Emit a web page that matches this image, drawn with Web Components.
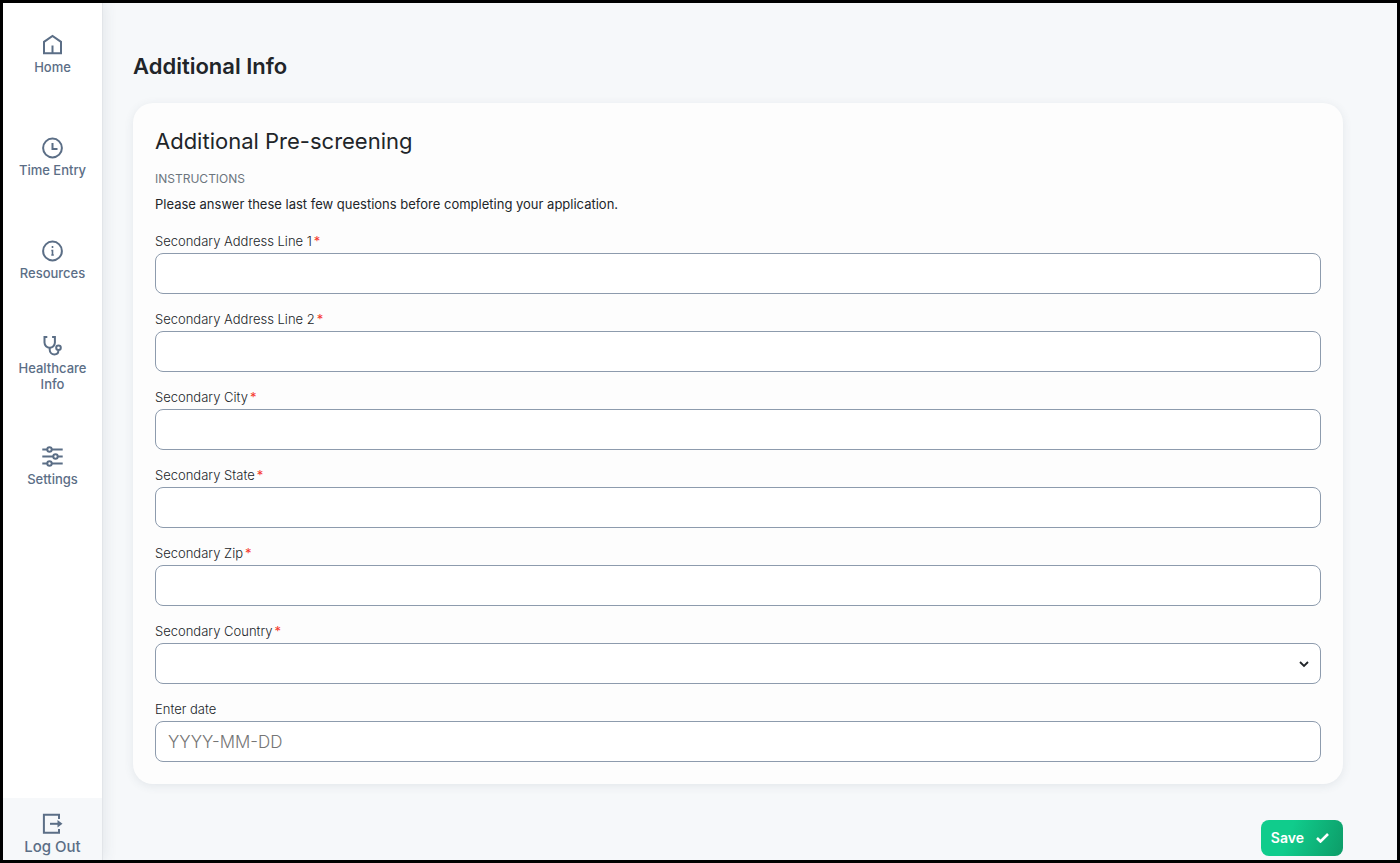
<!DOCTYPE html>
<html lang="en">
<head>
<meta charset="utf-8">
<meta name="viewport" content="width=device-width, initial-scale=1">
<title>Additional Info</title>
<style>
    * {
        box-sizing: border-box;
    }
    body {
        margin: 0;
        min-height: 100vh;
        display: flex;
        border: 3px solid #000;
        background-color: #f6f8fa;
        color: #212529;
        font-family: Inter, "Open Sans", sans-serif;
        --slate: #5b6e86;
        --line: #8d9bad;
    }
</style>
</head>
<body>
    <side-bar>
        <nav-item icon="home" href="#home">Home</nav-item>
        <nav-item icon="clock" href="#time">Time Entry</nav-item>
        <nav-item icon="info" href="#resources">Resources</nav-item>
        <nav-item icon="stethoscope" href="#healthcare">Healthcare Info</nav-item>
        <nav-item icon="sliders" href="#settings">Settings</nav-item>
        <nav-item slot="bottom" class="logout" icon="logout" href="#logout">Log Out</nav-item>
    </side-bar>
    <form-page heading="Additional Info">
        <form-card heading="Additional Pre-screening">
            <span slot="instructions">Please answer these last few questions before completing your application.</span>
            <form-field label="Secondary Address Line 1" required></form-field>
            <form-field label="Secondary Address Line 2" required></form-field>
            <form-field label="Secondary City" required></form-field>
            <form-field label="Secondary State" required></form-field>
            <form-field label="Secondary Zip" required></form-field>
            <form-field label="Secondary Country" type="select" required></form-field>
            <form-field label="Enter date" placeholder="YYYY-MM-DD"></form-field>
        </form-card>
        <save-button slot="actions">Save</save-button>
    </form-page>

<script>
const icons = {
    home: `<path d="M3.5 20.2V8.8L12 3l8.500 5.800v11.400z"/><path d="M12 20v-7.500"/>`,
    clock: `<circle cx="12" cy="12" r="9.400"/><path d="M12 7v6h5"/>`,
    info: `<circle cx="12" cy="12" r="9.400"/><path d="M12 7v2M10.800 11.500H12V16M10.800 16h2.500" stroke-width="1.600"/>`,
    stethoscope: `<path d="M6.800 3H4v5.500a5.200 5.200 0 0 0 10.400 0V3h-2.800"/><path d="M9.200 13.700v2a4.700 4.700 0 0 0 4.700 4.700c2.500 0 4-1.500 4-4.200"/><circle cx="18" cy="13.800" r="2.300"/>`,
    sliders: `<path d="M1.800 4.500h5M11.200 4.500h11M1.800 11.500h11M17.200 11.500h5M1.800 18.500h5M11.200 18.500h11"/><circle cx="9" cy="4.500" r="2.200"/><circle cx="15" cy="11.500" r="2.200"/><circle cx="9" cy="18.500" r="2.200"/>`,
    logout: `<path d="M18.500 7V2.800H3.400v18h15.100V17"/><path d="M9.500 11.800H18"/><path d="M17 8l5 3.800-5 3.800z" fill="currentColor" stroke="none"/>`
};

class SideBar extends HTMLElement {
    constructor() {
        super();
        this.attachShadow({mode: "open"}).innerHTML = `
<style>
    :host {
        flex: none;
        display: flex;
        flex-direction: column;
        width: 100px;
        background-color: #fff;
        border-right: 1px solid #e2e5e9;
        box-shadow: 2px 0 12px rgba(60, 75, 95, 0.1);
    }
    nav {
        flex: 1;
    }
</style>
<nav><slot></slot></nav>
<slot name="bottom"></slot>`;
    }
}

class NavItem extends HTMLElement {
    constructor() {
        super();
        this.attachShadow({mode: "open"});
    }

    connectedCallback() {
        this.shadowRoot.innerHTML = `
<style>
    :host {
        display: block;
        color: var(--slate);
        font-size: 13px;
        font-weight: 500;
        line-height: 16px;
    }
    a {
        display: flex;
        flex-direction: column;
        align-items: center;
        justify-content: center;
        gap: 2px;
        min-height: 103px;
        padding: 0 12px 1px;
        box-sizing: border-box;
        color: inherit;
        text-align: center;
        text-decoration: none;
    }
    svg {
        flex: none;
        fill: none;
        stroke: currentColor;
        stroke-width: 2;
    }
    :host(.logout) {
        background-color: #f6f8fa;
        font-size: 15px;
        line-height: 18px;
    }
    :host(.logout) a {
        min-height: 0;
        padding: 14px 12px 4px;
    }
</style>
<a href="${this.getAttribute("href")}">
    <svg width="25" height="24" viewBox="-0.5 0 25 24" aria-hidden="true">${icons[this.getAttribute("icon")]}</svg>
    <span><slot></slot></span>
</a>`;
    }
}

class FormPage extends HTMLElement {
    constructor() {
        super();
        this.attachShadow({mode: "open"});
    }

    connectedCallback() {
        this.shadowRoot.innerHTML = `
<style>
    :host {
        flex: 1;
        min-width: 0;
        display: block;
        padding: 47px 54px 3px 30px;
    }
    h1 {
        margin: 0 0 21px;
        font-size: 22px;
        font-weight: 600;
        line-height: 32px;
    }
    footer {
        display: flex;
        justify-content: flex-end;
        margin-top: 36px;
    }
</style>
<main>
    <h1>${this.getAttribute("heading")}</h1>
    <slot></slot>
    <footer><slot name="actions"></slot></footer>
</main>`;
    }
}

class FormCard extends HTMLElement {
    constructor() {
        super();
        this.attachShadow({mode: "open"});
    }

    connectedCallback() {
        this.shadowRoot.innerHTML = `
<style>
    :host {
        display: block;
        padding: 22px;
        border-radius: 20px;
        background-color: #fdfdfd;
        box-shadow: 0 2px 10px rgba(60, 75, 95, 0.1);
    }
    h2 {
        margin: 0 0 12px;
        font-size: 22px;
        font-weight: 400;
        line-height: 32px;
    }
    h3 {
        margin: 0 0 5px;
        color: #6c757d;
        font-size: 12px;
        font-weight: 400;
        line-height: 20px;
    }
    p {
        margin: 0 0 17px;
        font-size: 13px;
        font-weight: 400;
        line-height: 20px;
    }
    .fields {
        display: flex;
        flex-direction: column;
        gap: 15px;
    }
</style>
<h2>${this.getAttribute("heading")}</h2>
<h3>INSTRUCTIONS</h3>
<p><slot name="instructions"></slot></p>
<div class="fields"><slot></slot></div>`;
    }
}

class FormField extends HTMLElement {
    constructor() {
        super();
        this.attachShadow({mode: "open"});
    }

    connectedCallback() {
        const required = this.hasAttribute("required");
        const attrs = `id="control"${required ? " required" : ""}`;
        const control = this.getAttribute("type") === "select"
            ? `<select ${attrs}><option value=""></option><option>Canada</option><option>United States</option></select>
               <svg width="10" height="8" viewBox="0 0 10 8" aria-hidden="true"><path d="M1 2l4 4 4-4"/></svg>`
            : `<input ${attrs} type="text" placeholder="${this.getAttribute("placeholder") || ""}">`;

        this.shadowRoot.innerHTML = `
<style>
    :host {
        display: flex;
        flex-direction: column;
        gap: 2px;
    }
    label {
        display: flex;
        gap: 2px;
        font-size: 13px;
        font-weight: 300;
        line-height: 20px;
    }
    .star {
        color: #f5382c;
        font-weight: 400;
    }
    .control {
        display: grid;
        align-items: center;
    }
    .control > * {
        grid-area: 1 / 1;
    }
    input, select {
        appearance: none;
        box-sizing: border-box;
        width: 100%;
        height: 41px;
        margin: 0;
        padding: 0 12px;
        border: 1px solid var(--line);
        border-radius: 8px;
        background-color: #fff;
        color: #212529;
        font: 300 17px/24px Inter, "Open Sans", sans-serif;
    }
    input::placeholder {
        color: #757575;
    }
    svg {
        justify-self: end;
        margin-right: 12px;
        fill: none;
        stroke: #212529;
        stroke-width: 1.8;
        pointer-events: none;
    }
</style>
<label for="control">${this.getAttribute("label")}${required ? `<span class="star">*</span>` : ""}</label>
<div class="control">${control}</div>`;
    }
}

class SaveButton extends HTMLElement {
    constructor() {
        super();
        this.attachShadow({mode: "open"}).innerHTML = `
<style>
    :host {
        display: block;
    }
    button {
        display: flex;
        align-items: center;
        gap: 12px;
        height: 36px;
        padding: 0 14px 0 10px;
        border: 0;
        border-radius: 8px;
        background: linear-gradient(110deg, #10cc8c 35%, #0d9c68);
        color: #fff;
        font: 600 14px/20px Inter, "Open Sans", sans-serif;
    }
    svg {
        fill: none;
        stroke: currentColor;
        stroke-width: 2.6;
    }
</style>
<button type="button">
    <slot></slot>
    <svg width="13" height="10" viewBox="0 0 13 10" aria-hidden="true"><path d="M1 5l3.500 3.500L12 1"/></svg>
</button>`;
    }
}

customElements.define("side-bar", SideBar);
customElements.define("nav-item", NavItem);
customElements.define("form-page", FormPage);
customElements.define("form-card", FormCard);
customElements.define("form-field", FormField);
customElements.define("save-button", SaveButton);
</script>
</body>
</html>
